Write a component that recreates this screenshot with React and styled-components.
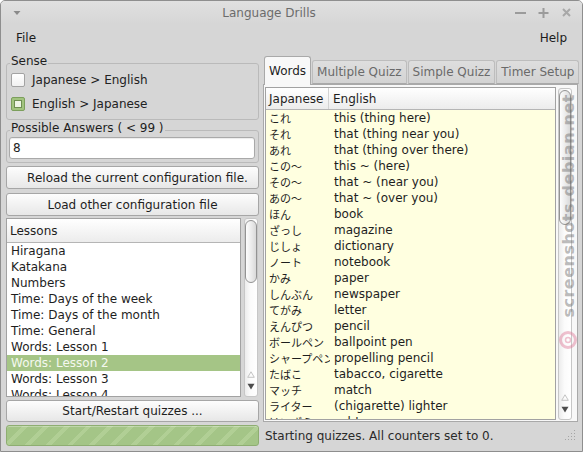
import React from 'react'
import styled, { createGlobalStyle } from 'styled-components'

const GlobalStyle = createGlobalStyle`
  html, body { margin: 0; padding: 0; background: #ffffff; }
  body {
    font-family: "DejaVu Sans", "Noto Sans CJK JP", sans-serif;
    font-size: 12px;
    color: #222;
  }
  * { box-sizing: border-box; }
`

const lessons = [
  'Hiragana',
  'Katakana',
  'Numbers',
  'Time: Days of the week',
  'Time: Days of the month',
  'Time: General',
  'Words: Lesson 1',
  'Words: Lesson 2',
  'Words: Lesson 3',
  'Words: Lesson 4',
  'Words: Lesson 5',
]

const words = [
  ['これ', 'this (thing here)'],
  ['それ', 'that (thing near you)'],
  ['あれ', 'that (thing over there)'],
  ['この〜', 'this ~ (here)'],
  ['その〜', 'that ~ (near you)'],
  ['あの〜', 'that ~ (over you)'],
  ['ほん', 'book'],
  ['ざっし', 'magazine'],
  ['じしょ', 'dictionary'],
  ['ノート', 'notebook'],
  ['かみ', 'paper'],
  ['しんぶん', 'newspaper'],
  ['てがみ', 'letter'],
  ['えんぴつ', 'pencil'],
  ['ボールペン', 'ballpoint pen'],
  ['シャープペンシル', 'propelling pencil'],
  ['たばこ', 'tabacco, cigarette'],
  ['マッチ', 'match'],
  ['ライター', '(chigarette) lighter'],
  ['はいざら', 'ashtray'],
]

const Window = styled.div`
  position: relative;
  width: 583px;
  height: 452px;
  border: 1px solid #8e8e8e;
  border-radius: 5px 5px 0 0;
  background: #d6d6d6;
  display: flex;
  flex-direction: column;
  overflow: hidden;
`

const TitleBar = styled.div`
  height: 23px;
  flex: none;
  display: grid;
  grid-template-columns: 29px 1fr 74px;
  align-items: center;
  background: linear-gradient(#e0e0e0, #d6d6d6);
`

const TitleText = styled.div`
  text-align: center;
  color: #6c6c6c;
  font-size: 12px;
`

const WinButtons = styled.div`
  display: flex;
  align-items: center;
  gap: 10px;
  padding-left: 6px;
`

const MenuBar = styled.div`
  height: 28px;
  flex: none;
  display: flex;
  justify-content: space-between;
  align-items: center;
  padding: 0 15px;
`

const MenuItem = styled.span`
  color: #1c1c1c;
`

const Body = styled.div`
  flex: 1;
  display: grid;
  grid-template-columns: 253px 315px;
  grid-template-rows: 370px 21px;
  column-gap: 4px;
  row-gap: 3px;
  padding: 0 4px 5px 5px;
`

const LeftColumn = styled.div`
  display: flex;
  flex-direction: column;
  min-height: 0;
`

const Frame = styled.div`
  margin-top: ${p => p.$mt}px;
  border: 1px solid #bababa;
  border-radius: 3px;
  padding-bottom: 3px;
`

const FrameLabel = styled.div`
  margin: -10px 0 0 3px;
  padding: 0 1px;
  width: fit-content;
  line-height: 14px;
  background: #d6d6d6;
  color: #1e1e1e;
`

const CheckRow = styled.div`
  height: 24px;
  display: flex;
  align-items: center;
  gap: 7px;
  padding-left: 4px;
`

const CheckBox = styled.span`
  width: 14px;
  height: 14px;
  border-radius: 2px;
  display: flex;
  align-items: center;
  justify-content: center;
  border: 1px solid ${p => (p.$checked ? '#7c9f5c' : '#a3a3a3')};
  background: ${p => (p.$checked ? '#a2c47f' : 'linear-gradient(#ffffff, #f1f1f1)')};

  &::after {
    content: '';
    display: ${p => (p.$checked ? 'block' : 'none')};
    width: 6px;
    height: 6px;
    border: 1px solid #6f8f52;
    background: #eef5e6;
  }
`

const NumberInput = styled.div`
  margin: 2px 3px 0 2px;
  height: 22px;
  border: 1px solid #a9a9a9;
  border-radius: 3px;
  background: #ffffff;
  box-shadow: inset 0 1px 1px rgba(0, 0, 0, 0.08);
  padding-left: 3px;
  display: flex;
  align-items: center;
`

const Button = styled.div`
  margin-top: ${p => p.$mt}px;
  height: ${p => p.$h}px;
  flex: none;
  border: 1px solid #a6a6a6;
  border-radius: 3px;
  background: linear-gradient(#fdfdfd, #e7e7e7);
  display: flex;
  align-items: center;
  justify-content: center;
  padding-left: ${p => p.$indent || 0}px;
  color: #1e1e1e;
`

const ListArea = styled.div`
  margin-top: 2px;
  height: 179px;
  flex: none;
  display: flex;
  gap: 3px;
`

const TreeView = styled.div`
  flex: 1;
  border: 1px solid #a2a2a2;
  background: ${p => p.$bg || '#ffffff'};
  overflow: hidden;
  display: flex;
  flex-direction: column;
`

const HeaderRow = styled.div`
  height: ${p => p.$h}px;
  flex: none;
  display: ${p => (p.$grid ? 'grid' : 'flex')};
  grid-template-columns: 63px 1fr;
  align-items: stretch;
  background: linear-gradient(#ffffff, #ececec);
  border-bottom: 1px solid #b5b5b5;
`

const HeaderCell = styled.div`
  display: flex;
  align-items: center;
  padding-left: ${p => p.$pl}px;
  border-right: ${p => (p.$divider ? '1px solid #d2d2d2' : 'none')};
  color: #1e1e1e;
`

const LessonRow = styled.div`
  height: 16px;
  line-height: 16px;
  flex: none;
  padding-left: 4px;
  white-space: nowrap;
  background: ${p => (p.$selected ? '#a5c586' : 'transparent')};
  color: ${p => (p.$selected ? '#f4f8ef' : '#1e1e1e')};
`

const WordRow = styled.div`
  height: 16px;
  flex: none;
  display: grid;
  grid-template-columns: 64px 1fr;
  line-height: 16px;
`

const JaCell = styled.div`
  padding-left: 3px;
  font-family: "Noto Sans CJK JP", "DejaVu Sans", sans-serif;
  font-size: 11px;
  white-space: nowrap;
  overflow: hidden;
  color: #1e1e1e;
`

const EnCell = styled.div`
  padding-left: 4px;
  white-space: nowrap;
  color: #1e1e1e;
`

const Trough = styled.div`
  width: 14px;
  flex: none;
  margin: ${p => p.$margin || '0'};
  border: 1px solid #c7c7c7;
  border-radius: 3px;
  background: linear-gradient(to right, #ececec, #fbfbfb 45%, #ffffff);
  display: flex;
  flex-direction: column;
  align-items: center;
  padding: 1px 0 6px;
`

const Thumb = styled.div`
  width: 12px;
  height: ${p => p.$h}px;
  border: 1px solid #939393;
  border-radius: 6px;
  background: linear-gradient(to right, #fdfdfd, #e9e9e9 60%, #d9d9d9);
`

const Arrows = styled.div`
  margin-top: auto;
  display: flex;
  flex-direction: column;
  align-items: center;
  gap: 5px;
`

const RightColumn = styled.div`
  display: flex;
  flex-direction: column;
  min-height: 0;
`

const TabRow = styled.div`
  margin-top: 4px;
  height: 28px;
  flex: none;
  display: flex;
  align-items: flex-end;
  padding-left: 1px;
  gap: 1px;
`

const Tab = styled.div`
  position: relative;
  z-index: 1;
  height: ${p => (p.$active ? 29 : 24)}px;
  margin-bottom: ${p => (p.$active ? -1 : 0)}px;
  padding: 0 4px;
  display: flex;
  align-items: center;
  border: 1px solid ${p => (p.$active ? '#a9a9a9' : '#bdbdbd')};
  border-bottom: ${p => (p.$active ? 'none' : '1px solid #a9a9a9')};
  border-radius: 3px 3px 0 0;
  background: ${p => (p.$active ? '#f8f8f8' : 'linear-gradient(#dedede, #d3d3d3)')};
  color: ${p => (p.$active ? '#1e1e1e' : '#6a6a6a')};
  white-space: nowrap;
`

const Page = styled.div`
  flex: 1;
  min-height: 0;
  border: 1px solid #a9a9a9;
  background: #f8f8f8;
  display: flex;
  gap: 2px;
  padding: 2px 5px 1px 1px;
`

const Progress = styled.div`
  border: 1px solid #8eae71;
  border-radius: 3px;
  background: repeating-linear-gradient(
    135deg,
    #a4c587 0px,
    #a4c587 11px,
    #b1cf95 11px,
    #b1cf95 15px
  );
  box-shadow: inset 0 1px 0 rgba(255, 255, 255, 0.3);
`

const StatusBar = styled.div`
  display: flex;
  align-items: center;
  justify-content: space-between;
  padding: 0 2px 0 2px;
  color: #2a2a2a;
`

const Watermark = styled.div`
  position: absolute;
  left: 558px;
  top: 93px;
  writing-mode: vertical-rl;
  transform: rotate(180deg);
  font-family: "DejaVu Sans", sans-serif;
  font-weight: bold;
  font-size: 16px;
  letter-spacing: 0.5px;
  color: rgba(105, 105, 105, 0.45);
  pointer-events: none;
`

const WatermarkLogo = styled.svg`
  position: absolute;
  left: 558px;
  top: 330px;
  pointer-events: none;
`

const UpArrow = () => (
  <svg width="8" height="7" viewBox="0 0 8 7">
    <path d="M4 0.8 L7.3 6.3 L0.7 6.3 Z" fill="none" stroke="#bdbdbd" strokeWidth="0.9" />
  </svg>
)

const DownArrow = () => (
  <svg width="8" height="7" viewBox="0 0 8 7">
    <path d="M0.5 0.8 L7.5 0.8 L4 6.5 Z" fill="#4d4d4d" />
  </svg>
)

const ScrollBar = ({ thumb, margin }) => (
  <Trough $margin={margin}>
    <Thumb $h={thumb} />
    <Arrows>
      <UpArrow />
      <DownArrow />
    </Arrows>
  </Trough>
)

const Grip = () => (
  <svg width="11" height="11" viewBox="0 0 11 11">
    {[[9, 1], [6, 4], [9, 4], [3, 7], [6, 7], [9, 7], [0, 10], [3, 10], [6, 10], [9, 10]].map(([x, y]) => (
      <rect key={`${x}-${y}`} x={x} y={y - 1} width="1" height="1" fill="#a5a5a5" />
    ))}
  </svg>
)

export default function App() {
  return (
    <>
      <GlobalStyle />
      <Window>
        <TitleBar>
          <svg width="29" height="23" viewBox="0 0 29 23">
            <path d="M12.5 10 L19.5 10 L16 14 Z" fill="#8a8a8a" />
          </svg>
          <TitleText>Language Drills</TitleText>
          <WinButtons>
            <svg width="13" height="13" viewBox="0 0 13 13">
              <path d="M1 7 H12" stroke="#9b9b9b" strokeWidth="2" />
            </svg>
            <svg width="13" height="13" viewBox="0 0 13 13">
              <path d="M1.5 7 H11.5 M6.5 2 V12" stroke="#9b9b9b" strokeWidth="2" />
            </svg>
            <svg width="13" height="13" viewBox="0 0 13 13">
              <path d="M3 3 L10 10 M10 3 L3 10" stroke="#a8a8a8" strokeWidth="2" />
            </svg>
          </WinButtons>
        </TitleBar>

        <MenuBar>
          <MenuItem>File</MenuItem>
          <MenuItem>Help</MenuItem>
        </MenuBar>

        <Body>
          <LeftColumn>
            <Frame $mt={11}>
              <FrameLabel>Sense</FrameLabel>
              <CheckRow>
                <CheckBox />
                <span>Japanese &gt; English</span>
              </CheckRow>
              <CheckRow>
                <CheckBox $checked />
                <span>English &gt; Japanese</span>
              </CheckRow>
            </Frame>

            <Frame $mt={10}>
              <FrameLabel>Possible Answers ( &lt; 99 )</FrameLabel>
              <NumberInput>8</NumberInput>
            </Frame>

            <Button $mt={3} $h={23} $indent={10}>Reload the current configuration file.</Button>
            <Button $mt={4} $h={23}>Load other configuration file</Button>

            <ListArea>
              <TreeView>
                <HeaderRow $h={24}>
                  <HeaderCell $pl={3}>Lessons</HeaderCell>
                </HeaderRow>
                {lessons.map(name => (
                  <LessonRow key={name} $selected={name === 'Words: Lesson 2'}>
                    {name}
                  </LessonRow>
                ))}
              </TreeView>
              <ScrollBar thumb={63} margin="0 1px 0 0" />
            </ListArea>

            <Button $mt={3} $h={22}>Start/Restart quizzes ...</Button>
          </LeftColumn>

          <RightColumn>
            <TabRow>
              <Tab $active>Words</Tab>
              <Tab>Multiple Quizz</Tab>
              <Tab>Simple Quizz</Tab>
              <Tab>Timer Setup</Tab>
            </TabRow>
            <Page>
              <TreeView $bg="#ffffe0">
                <HeaderRow $h={22} $grid>
                  <HeaderCell $pl={3} $divider>Japanese</HeaderCell>
                  <HeaderCell $pl={4}>English</HeaderCell>
                </HeaderRow>
                {words.map(([ja, en]) => (
                  <WordRow key={ja}>
                    <JaCell>{ja}</JaCell>
                    <EnCell>{en}</EnCell>
                  </WordRow>
                ))}
              </TreeView>
              <ScrollBar thumb={135} margin="1px 0 0 0" />
            </Page>
          </RightColumn>

          <Progress />
          <StatusBar>
            <span>Starting quizzes. All counters set to 0.</span>
            <Grip />
          </StatusBar>
        </Body>

        <Watermark>screenshots.debian.net</Watermark>
        <WatermarkLogo width="18" height="18" viewBox="0 0 18 18">
          <circle cx="9" cy="9" r="7.5" fill="none" stroke="rgba(222,120,150,0.45)" strokeWidth="3" />
          <circle cx="9" cy="9" r="2.5" fill="none" stroke="rgba(222,120,150,0.45)" strokeWidth="1.5" />
        </WatermarkLogo>
      </Window>
    </>
  )
}
